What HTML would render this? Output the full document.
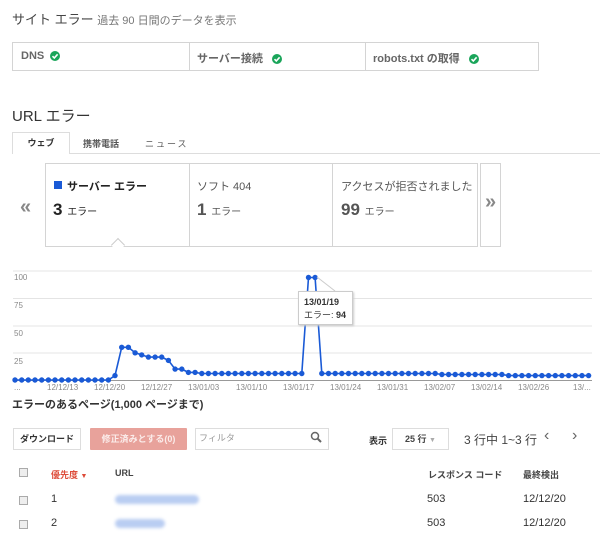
<!DOCTYPE html>
<html><head><meta charset="utf-8"><style>
*{margin:0;padding:0;box-sizing:border-box}
body{width:600px;height:533px;background:#fff;font-family:"Liberation Sans","Noto Sans CJK JP",sans-serif;color:#333;position:relative;overflow:hidden}
.a{position:absolute;white-space:nowrap}
.chk{position:absolute;width:9px;height:9px;border:1px solid #aaa;background:#eee}
.blur{position:absolute;height:9px;border-radius:5px;background:#b9cdf2;filter:blur(1.5px)}
.ok{display:inline-block;vertical-align:-2px;margin-left:6px}
</style></head><body>
<div class="a" style="left:12px;top:9px;font-size:13px;color:#444">サイト エラー <span style="font-size:11px;color:#777">過去 90 日間のデータを表示</span></div>
<div class="a" style="left:12px;top:42px;width:527px;height:29px;border:1px solid #d4d4d4"></div>
<div class="a" style="left:189px;top:42px;width:1px;height:29px;background:#d4d4d4"></div>
<div class="a" style="left:365px;top:42px;width:1px;height:29px;background:#d4d4d4"></div>
<div class="a" style="left:21px;top:50px;font-size:11px;font-weight:bold;color:#666">DNS<svg class="ok" width="10" height="10"><circle cx="5" cy="5" r="5" fill="#1aa55a"/><path d="M2.5 5.2 L4.3 7 L7.6 3.3" stroke="#fff" stroke-width="1.6" fill="none"/></svg></div>
<div class="a" style="left:197px;top:50px;font-size:11px;font-weight:bold;color:#666">サーバー接続 <svg class="ok" width="10" height="10"><circle cx="5" cy="5" r="5" fill="#1aa55a"/><path d="M2.5 5.2 L4.3 7 L7.6 3.3" stroke="#fff" stroke-width="1.6" fill="none"/></svg></div>
<div class="a" style="left:373px;top:50px;font-size:11px;font-weight:bold;color:#666">robots.txt の取得 <svg class="ok" width="10" height="10"><circle cx="5" cy="5" r="5" fill="#1aa55a"/><path d="M2.5 5.2 L4.3 7 L7.6 3.3" stroke="#fff" stroke-width="1.6" fill="none"/></svg></div>
<div class="a" style="left:12px;top:105px;font-size:15px;color:#333">URL エラー</div>
<div class="a" style="left:12px;top:153px;width:588px;height:1px;background:#ddd"></div>
<div class="a" style="left:12px;top:132px;width:58px;height:22px;border:1px solid #ddd;border-bottom:none;background:#fff;font-size:9px;font-weight:bold;text-align:center;line-height:20px">ウェブ</div>
<div class="a" style="left:83px;top:137px;font-size:9px;font-weight:bold;color:#555">携帯電話</div>
<div class="a" style="left:145px;top:137px;font-size:9px;color:#555;letter-spacing:2px">ニュース</div>
<div class="a" style="left:20px;top:196px;font-size:20px;font-weight:bold;color:#888">«</div>
<div class="a" style="left:45px;top:163px;width:433px;height:84px;border:1px solid #d4d4d4"></div>
<div class="a" style="left:189px;top:163px;width:1px;height:84px;background:#d4d4d4"></div>
<div class="a" style="left:332px;top:163px;width:1px;height:84px;background:#d4d4d4"></div>
<div class="a" style="left:480px;top:163px;width:21px;height:84px;border:1px solid #d4d4d4;font-size:20px;font-weight:bold;color:#888;text-align:center;line-height:76px">»</div>
<div class="a" style="left:113px;top:240px;width:10px;height:10px;background:#fff;border-left:1px solid #ccc;border-top:1px solid #ccc;transform:rotate(45deg)"></div>
<div class="a" style="left:45px;top:247px;width:433px;height:1px;background:#fff"></div>
<div class="a" style="left:45px;top:246px;width:67px;height:1px;background:#d4d4d4"></div>
<div class="a" style="left:124px;top:246px;width:354px;height:1px;background:#d4d4d4"></div>
<div class="a" style="left:54px;top:181px;width:8px;height:8px;background:#1a5ad6"></div>
<div class="a" style="left:67px;top:178px;font-size:11px;font-weight:bold;color:#222">サーバー エラー</div>
<div class="a" style="left:53px;top:200px;font-size:17px;font-weight:bold;color:#222">3 <span style="font-size:10px;font-weight:normal">エラー</span></div>
<div class="a" style="left:197px;top:178px;font-size:11px;color:#555">ソフト 404</div>
<div class="a" style="left:197px;top:200px;font-size:17px;font-weight:bold;color:#555">1 <span style="font-size:10px;font-weight:normal">エラー</span></div>
<div class="a" style="left:341px;top:178px;font-size:11px;color:#555">アクセスが拒否されました</div>
<div class="a" style="left:341px;top:200px;font-size:17px;font-weight:bold;color:#555">99 <span style="font-size:10px;font-weight:normal">エラー</span></div>
<svg class="a" style="left:0;top:260px" width="600" height="130" id="ch">
<g stroke="#e4e4e4"><line x1="13" x2="592" y1="11" y2="11"/><line x1="13" x2="592" y1="38.5" y2="38.5"/><line x1="13" x2="592" y1="66" y2="66"/><line x1="13" x2="592" y1="93" y2="93"/></g>
<line x1="13" x2="592" y1="120.5" y2="120.5" stroke="#999"/>
<g font-size="8" fill="#888" font-family="Liberation Sans,sans-serif"><text x="14" y="20">100</text><text x="14" y="48">75</text><text x="14" y="76">50</text><text x="14" y="104">25</text></g>
</svg>
<div class="a" style="left:298px;top:291px;width:55px;height:34px;border:1px solid #ccc;background:#fff;box-shadow:1px 1px 2px #ccc;font-size:9px;padding:4px 5px;line-height:13px"><b>13/01/19</b><br>エラー: <b>94</b></div>
<div class="a" style="top:383px;left:0;width:600px;font-size:8px;color:#888">
<span class="a" style="left:14px">...</span><span class="a" style="left:47px">12/12/13</span><span class="a" style="left:94px">12/12/20</span><span class="a" style="left:141px">12/12/27</span><span class="a" style="left:188px">13/01/03</span><span class="a" style="left:236px">13/01/10</span><span class="a" style="left:283px">13/01/17</span><span class="a" style="left:330px">13/01/24</span><span class="a" style="left:377px">13/01/31</span><span class="a" style="left:424px">13/02/07</span><span class="a" style="left:471px">13/02/14</span><span class="a" style="left:518px">13/02/26</span><span class="a" style="left:573px">13/...</span></div>
<div class="a" style="left:12px;top:396px;font-size:11px;font-weight:bold;color:#333">エラーのあるページ(1,000 ページまで)</div>
<div class="a" style="left:13px;top:428px;width:68px;height:22px;border:1px solid #ddd;font-size:9px;font-weight:bold;text-align:center;line-height:20px;color:#333">ダウンロード</div>
<div class="a" style="left:90px;top:428px;width:97px;height:22px;background:#e8a29b;border-radius:1px;font-size:9px;font-weight:bold;text-align:center;line-height:22px;color:#fbecea">修正済みとする(0)</div>
<div class="a" style="left:195px;top:428px;width:134px;height:22px;border:1px solid #ddd;font-size:9px;color:#999;padding:2px 3px">フィルタ</div>
<svg class="a" style="left:310px;top:431px" width="12" height="12"><circle cx="5" cy="5" r="3.5" fill="none" stroke="#666" stroke-width="1.5"/><line x1="7.5" y1="7.5" x2="11" y2="11" stroke="#666" stroke-width="2"/></svg>
<div class="a" style="left:369px;top:434px;font-size:9px;font-weight:bold">表示</div>
<div class="a" style="left:392px;top:428px;width:57px;height:22px;border:1px solid #ddd;font-size:9px;font-weight:bold;line-height:20px;padding-left:12px;color:#444">25 行 <span style="color:#aaa;font-size:7px">▼</span></div>
<div class="a" style="left:464px;top:431px;font-size:12px;color:#444">3 行中 1~3 行</div>
<div class="a" style="left:544px;top:427px;font-size:16px;color:#666">&#x2039;</div>
<div class="a" style="left:572px;top:427px;font-size:16px;color:#666">&#x203A;</div>
<div class="chk" style="left:19px;top:468px"></div>
<div class="a" style="left:51px;top:468px;font-size:9px;font-weight:bold;color:#dd4b39">優先度 <span style="font-size:7px">▼</span></div>
<div class="a" style="left:115px;top:468px;font-size:9px;font-weight:bold;color:#444">URL</div>
<div class="a" style="left:428px;top:468px;font-size:9px;font-weight:bold;color:#444">レスポンス コード</div>
<div class="a" style="left:523px;top:468px;font-size:9px;font-weight:bold;color:#444">最終検出</div>
<div class="chk" style="left:19px;top:496px"></div>
<div class="a" style="left:51px;top:493px;font-size:11px">1</div>
<div class="blur" style="left:115px;top:495px;width:84px"></div>
<div class="a" style="left:427px;top:493px;font-size:11px">503</div>
<div class="a" style="left:523px;top:493px;font-size:11px">12/12/20</div>
<div class="chk" style="left:19px;top:520px"></div>
<div class="a" style="left:51px;top:517px;font-size:11px">2</div>
<div class="blur" style="left:115px;top:519px;width:50px"></div>
<div class="a" style="left:427px;top:517px;font-size:11px">503</div>
<div class="a" style="left:523px;top:517px;font-size:11px">12/12/20</div>
<script>
var v=[];for(var i=0;i<15;i++)v.push(0);
v=v.concat([4,30,30,25,23,21,21,21,18,10,10,7,7]);
while(v.length<44)v.push(6);v.push(94,94);
while(v.length<64)v.push(6);while(v.length<74)v.push(5);while(v.length<87)v.push(4);
var s=document.getElementById('ch'),p='',c='';
for(i=0;i<v.length;i++){var x=15+i*6.67,y=120-v[i]*1.09;p+=x.toFixed(1)+','+y.toFixed(1)+' ';c+='<circle cx="'+x.toFixed(1)+'" cy="'+y.toFixed(1)+'" r="2.7" fill="#1a5ad6"/>';}
s.insertAdjacentHTML('beforeend','<polyline points="'+p+'" fill="none" stroke="#1a5ad6" stroke-width="1.6"/>'+c+'<line x1="317" y1="17" x2="335" y2="31" stroke="#ccc"/>');
</script>
</body></html>
